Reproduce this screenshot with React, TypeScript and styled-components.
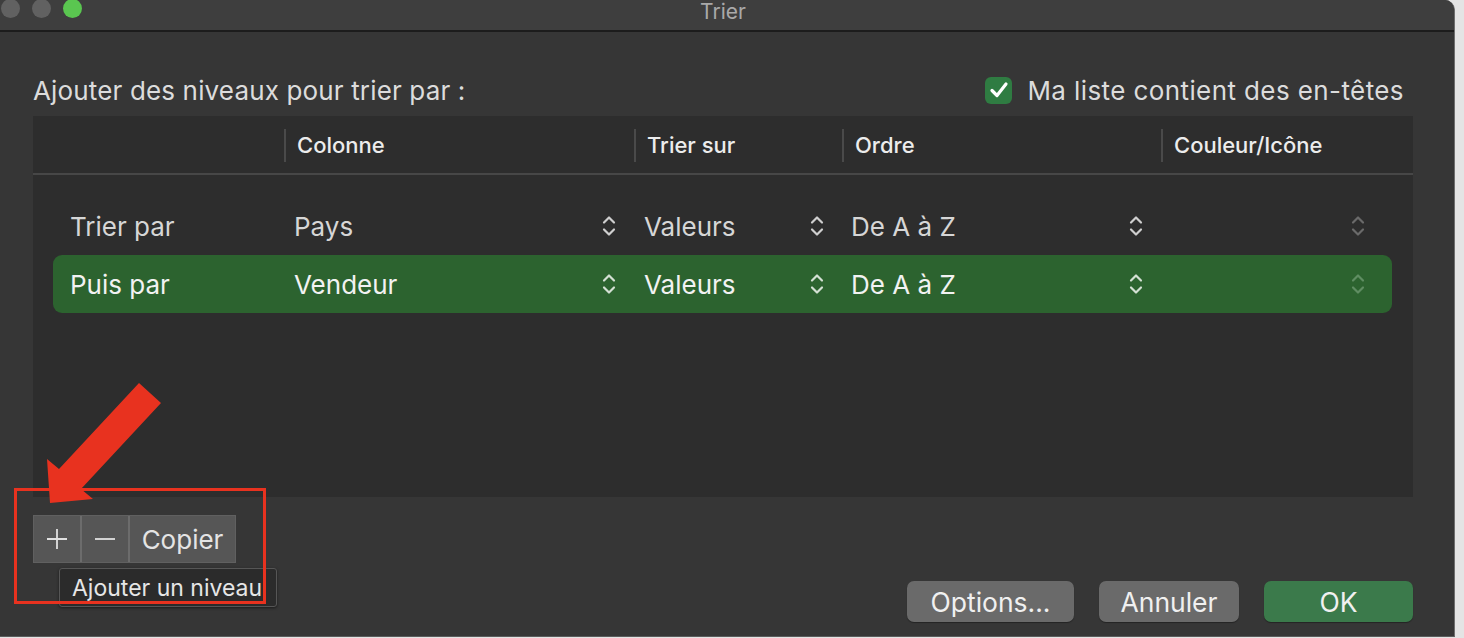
import React from "react";
import styled, { createGlobalStyle } from "styled-components";

const Global = createGlobalStyle`
  html, body { margin: 0; padding: 0; background: #e4e4e4; }
  body { font-family: Inter, "Noto Sans", "Liberation Sans", sans-serif; -webkit-font-smoothing: antialiased; }
  * { box-sizing: border-box; }
`;

const Window = styled.div`
  position: relative;
  width: 1455px;
  height: 637px;
  background: #363636;
  border-right: 1px solid #6e6e6e;
  border-bottom: 1px solid #5c5c5c;
  border-top-right-radius: 10px;
  display: flex;
  flex-direction: column;
  overflow: hidden;
`;

const TitleBar = styled.div`
  height: 32px;
  flex: none;
  background: #3e3e3e;
  border-bottom: 2px solid #1c1c1c;
  display: grid;
  grid-template-columns: 1fr auto 1fr;
  align-items: start;
`;

const Lights = styled.div`
  display: flex;
  gap: 12px;
  padding-left: 1px;
  margin-top: -1px;
`;

const Light = styled.span<{ $color: string }>`
  width: 19px;
  height: 19px;
  border-radius: 50%;
  background: ${(p) => p.$color};
`;

const Title = styled.div`
  font-size: 21px;
  color: #a9a9a9;
  line-height: 21px;
  padding-top: 1px;
  margin-left: -8px;
`;

const Content = styled.div`
  flex: 1;
  display: flex;
  flex-direction: column;
  padding: 0 41px 0 33px;
`;

const TopRow = styled.div`
  height: 52px;
  margin-top: 32px;
  display: flex;
  align-items: center;
  justify-content: space-between;
`;

const Label = styled.div`
  font-size: 26px;
  color: #dcdcdc;
  letter-spacing: 0.15px;
`;

const CheckWrap = styled.label`
  display: flex;
  align-items: center;
  gap: 15px;
  font-size: 26px;
  letter-spacing: 0.4px;
  color: #dcdcdc;
  margin-right: 9px;
`;

const CheckBox = styled.span`
  width: 27px;
  height: 27px;
  border-radius: 6px;
  background: #2f7c42;
  display: flex;
  align-items: center;
  justify-content: center;
`;

const Panel = styled.div`
  height: 381px;
  background: #2d2d2d;
  display: flex;
  flex-direction: column;
`;

const cols = "231px 350px 208px 319px 1fr";

const HeaderRow = styled.div`
  height: 59px;
  flex: none;
  display: grid;
  grid-template-columns: ${cols};
  align-items: center;
  padding: 0 21px 0 20px;
  border-bottom: 2px solid #474747;
`;

const HeaderCell = styled.div<{ $divider?: boolean }>`
  height: 33px;
  display: flex;
  align-items: center;
  padding-left: 11px;
  border-left: ${(p) => (p.$divider ? "2px solid #4a4a4a" : "none")};
  font-size: 22px;
  font-weight: 500;
  color: #ececec;
  margin-top: 1px;
`;

const Rows = styled.div`
  padding: 22px 21px 0 20px;
  display: flex;
  flex-direction: column;
`;

const Row = styled.div<{ $selected?: boolean }>`
  height: 58px;
  display: grid;
  grid-template-columns: ${cols};
  align-items: center;
  border-radius: 9px;
  background: ${(p) => (p.$selected ? "#2c632f" : "transparent")};
  color: ${(p) => (p.$selected ? "#f2f2f2" : "#d6d6d6")};
  font-size: 26px;
`;

const RowLabel = styled.div`
  padding-left: 17px;
`;

const SelectCell = styled.div<{ $pad?: number; $right?: number }>`
  display: flex;
  align-items: center;
  justify-content: space-between;
  padding-left: ${(p) => p.$pad ?? 10}px;
  padding-right: ${(p) => p.$right ?? 18}px;
`;

const Footer = styled.div`
  flex: 1;
  display: flex;
  justify-content: space-between;
  padding-top: 18px;
`;

const Segmented = styled.div`
  display: flex;
  height: 48px;
  background: #565656;
  border: 1px solid #606060;
  align-self: flex-start;
`;

const Seg = styled.button<{ $w: number }>`
  width: ${(p) => p.$w}px;
  height: 100%;
  border: none;
  border-left: 2px solid #6c6c6c;
  background: transparent;
  color: #e4e4e4;
  font-family: inherit;
  font-size: 26px;
  display: flex;
  align-items: center;
  justify-content: center;
  padding: 0;
  &:first-child { border-left: none; }
`;

const Tooltip = styled.div`
  position: absolute;
  left: 59px;
  top: 568px;
  width: 218px;
  height: 39px;
  background: #2b2b2b;
  border: 1px solid #565656;
  border-radius: 3px;
  color: #e6e6e6;
  font-size: 23px;
  padding-left: 12px;
  display: flex;
  align-items: center;
  white-space: nowrap;
  box-shadow: 0 1px 3px rgba(0,0,0,0.5);
`;

const Buttons = styled.div`
  display: flex;
  gap: 25px;
  margin-top: 66px;
  align-self: flex-start;
`;

const DlgButton = styled.button<{ $w: number; $primary?: boolean }>`
  width: ${(p) => p.$w}px;
  height: 41px;
  border: none;
  border-radius: 7px;
  background: ${(p) => (p.$primary ? "#3b7a4b" : "#6a6a6a")};
  color: #f0f0f0;
  font-family: inherit;
  font-size: 26.5px;
  padding: 0;
  box-shadow: 0 1px 1px rgba(0,0,0,0.35);
`;

const Highlight = styled.div`
  position: absolute;
  left: 14px;
  top: 488px;
  width: 252px;
  height: 116px;
  border: 3px solid #e8321f;
  pointer-events: none;
`;

const Arrow = styled.svg`
  position: absolute;
  left: 0;
  top: 0;
  pointer-events: none;
`;

const Chevron = ({ dim, selected }: { dim?: boolean; selected?: boolean }) => {
  const color = dim ? (selected ? "#5f8d62" : "#6a6a6a") : selected ? "#d4e0d4" : "#cfcfcf";
  return (
    <svg width="14" height="26" viewBox="0 0 14 26">
      <path d="M2 9.5 L7 4.5 L12 9.5" fill="none" stroke={color} strokeWidth="2.2" strokeLinecap="round" strokeLinejoin="round" />
      <path d="M2 16.5 L7 21.5 L12 16.5" fill="none" stroke={color} strokeWidth="2.2" strokeLinecap="round" strokeLinejoin="round" />
    </svg>
  );
};

const rows = [
  { label: "Trier par", col: "Pays", on: "Valeurs", order: "De A à Z", selected: false },
  { label: "Puis par", col: "Vendeur", on: "Valeurs", order: "De A à Z", selected: true },
];

export default function App() {
  return (
    <>
      <Global />
      <Window>
        <TitleBar>
          <Lights>
            <Light $color="#616161" />
            <Light $color="#616161" />
            <Light $color="#5ac650" />
          </Lights>
          <Title>Trier</Title>
          <div />
        </TitleBar>
        <Content>
          <TopRow>
            <Label>Ajouter des niveaux pour trier par :</Label>
            <CheckWrap>
              <CheckBox>
                <svg width="20" height="18" viewBox="0 0 20 18">
                  <path d="M3 9.5 L8 14.5 L17 3" fill="none" stroke="#ffffff" strokeWidth="3.2" strokeLinecap="round" strokeLinejoin="round" />
                </svg>
              </CheckBox>
              Ma liste contient des en-têtes
            </CheckWrap>
          </TopRow>
          <Panel>
            <HeaderRow>
              <div />
              <HeaderCell $divider>Colonne</HeaderCell>
              <HeaderCell $divider>Trier sur</HeaderCell>
              <HeaderCell $divider>Ordre</HeaderCell>
              <HeaderCell $divider>Couleur/Icône</HeaderCell>
            </HeaderRow>
            <Rows>
              {rows.map((r) => (
                <Row key={r.label} $selected={r.selected}>
                  <RowLabel>{r.label}</RowLabel>
                  <SelectCell>
                    <span>{r.col}</span>
                    <Chevron selected={r.selected} />
                  </SelectCell>
                  <SelectCell>
                    <span>{r.on}</span>
                    <Chevron selected={r.selected} />
                  </SelectCell>
                  <SelectCell $pad={9}>
                    <span>{r.order}</span>
                    <Chevron selected={r.selected} />
                  </SelectCell>
                  <SelectCell $right={27}>
                    <span />
                    <Chevron dim selected={r.selected} />
                  </SelectCell>
                </Row>
              ))}
            </Rows>
          </Panel>
          <Footer>
            <Segmented>
              <Seg $w={46} aria-label="Ajouter">
                <svg width="22" height="22" viewBox="0 0 22 22">
                  <path d="M11 1 V21 M1 11 H21" stroke="#e0e0e0" strokeWidth="1.8" />
                </svg>
              </Seg>
              <Seg $w={48} aria-label="Supprimer">
                <svg width="22" height="22" viewBox="0 0 22 22">
                  <path d="M1 11 H21" stroke="#e0e0e0" strokeWidth="1.8" />
                </svg>
              </Seg>
              <Seg $w={107}>Copier</Seg>
            </Segmented>
            <Buttons>
              <DlgButton $w={167}>Options...</DlgButton>
              <DlgButton $w={140}>Annuler</DlgButton>
              <DlgButton $w={149} $primary>OK</DlgButton>
            </Buttons>
          </Footer>
        </Content>
        <Tooltip>Ajouter un niveau</Tooltip>
        <Highlight />
        <Arrow width="200" height="520" viewBox="0 0 200 520">
          <polygon points="139,383 161,403 81,489 93,499 50,503 47,459 59,469" fill="#e8321f" />
        </Arrow>
      </Window>
    </>
  );
}
